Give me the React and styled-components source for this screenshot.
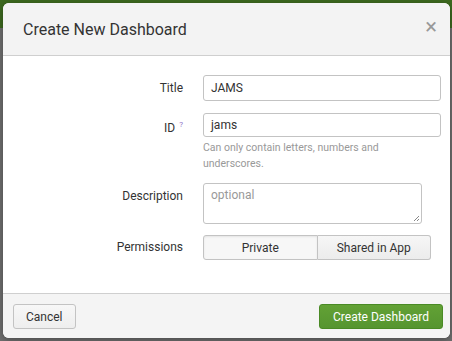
import React from 'react';
import styled, { createGlobalStyle } from 'styled-components';

const GlobalStyle = createGlobalStyle`
  html, body {
    margin: 0;
    padding: 0;
    width: 452px;
    height: 341px;
    overflow: hidden;
    font-family: Roboto, "Liberation Sans", sans-serif;
  }
`;

const Backdrop = styled.div`
  width: 452px;
  height: 341px;
  box-sizing: border-box;
  padding: 3px 2px 3px 3px;
  background: linear-gradient(#3d6a1f 0 28px, #6f6f6f 28px);
`;

const Modal = styled.div`
  height: 335px;
  display: flex;
  flex-direction: column;
  background: #fff;
  border-radius: 6px;
  overflow: hidden;
  box-shadow: 0 2px 8px rgba(0, 0, 0, 0.35);
`;

const Header = styled.div`
  height: 52px;
  flex: none;
  display: flex;
  align-items: center;
  justify-content: space-between;
  padding: 0 13px 0 20px;
  background: #f3f3f3;
  border-bottom: 1px solid #cfcfcf;
`;

const Title = styled.h3`
  margin: 0;
  font-size: 16px;
  font-weight: 400;
  color: #333;
`;

const Close = styled.span`
  font-size: 22px;
  line-height: 1;
  color: #999;
  margin-top: -4px;
`;

const Body = styled.div`
  flex: 1;
  padding: 19px 0 0;
  display: flex;
  flex-direction: column;
`;

const Row = styled.div`
  display: grid;
  grid-template-columns: 180px 1fr;
  column-gap: 20px;
  align-items: start;
  margin-bottom: ${p => p.$gap || 0}px;
`;

const Label = styled.label`
  text-align: right;
  font-size: 12px;
  color: #333;
  line-height: ${p => p.$lh || 26}px;
`;

const Help = styled.sup`
  font-size: 8px;
  color: #8f74c7;
  margin-left: 4px;
`;

const Field = styled.div`
  display: flex;
  flex-direction: column;
`;

const Input = styled.div`
  width: ${p => p.$w || 238}px;
  height: ${p => p.$h || 26}px;
  box-sizing: border-box;
  border: 1px solid #c3c3c3;
  border-radius: 3px;
  padding: ${p => (p.$multi ? '4px 7px' : '0 7px')};
  display: flex;
  align-items: ${p => (p.$multi ? 'flex-start' : 'center')};
  font-size: 12px;
  color: ${p => (p.$placeholder ? '#999' : '#333')};
  background: #fff;
  position: relative;
`;

const Grip = styled.svg`
  position: absolute;
  right: 1px;
  bottom: 1px;
`;

const HelpText = styled.div`
  font-size: 10.5px;
  line-height: 16px;
  color: #999;
  margin-top: 3px;
  width: 200px;
`;

const Toggle = styled.div`
  display: flex;
  width: 228px;
  height: 25px;
`;

const ToggleButton = styled.div`
  flex: 1;
  display: flex;
  align-items: center;
  justify-content: center;
  font-size: 12px;
  color: #333;
  border: 1px solid #c3c3c3;
  background: ${p => (p.$active ? '#f7f7f7' : 'linear-gradient(#f6f6f6, #ececec)')};
  box-shadow: ${p => (p.$active ? 'inset 0 1px 2px rgba(0,0,0,0.08)' : 'none')};
  border-radius: ${p => (p.$first ? '3px 0 0 3px' : '0 3px 3px 0')};
  ${p => (p.$first ? '' : 'border-left: none;')}
`;

const Footer = styled.div`
  height: 45px;
  flex: none;
  box-sizing: border-box;
  display: flex;
  justify-content: space-between;
  align-items: flex-start;
  padding: 10px 7px 0 10px;
  background: #f4f4f4;
  border-top: 1px solid #cfcfcf;
`;

const Button = styled.div`
  height: 25px;
  box-sizing: border-box;
  padding: 0 ${p => (p.$primary ? 13 : 12)}px;
  display: flex;
  align-items: center;
  font-size: 12px;
  border-radius: 3px;
  border: 1px solid ${p => (p.$primary ? '#4a8a25' : '#c3c3c3')};
  color: ${p => (p.$primary ? '#fff' : '#333')};
  background: ${p => (p.$primary ? 'linear-gradient(#62a135, #569530)' : 'linear-gradient(#f7f7f7, #eeeeee)')};
`;

export default function App() {
  return (
    <>
      <GlobalStyle />
      <Backdrop>
        <Modal>
          <Header>
            <Title>Create New Dashboard</Title>
            <Close>×</Close>
          </Header>
          <Body>
            <Row $gap={12}>
              <Label>Title</Label>
              <Input>JAMS</Input>
            </Row>
            <Row $gap={11}>
              <Label $lh={24}>ID<Help>?</Help></Label>
              <Field>
                <Input $h={24}>jams</Input>
                <HelpText>Can only contain letters, numbers and underscores.</HelpText>
              </Field>
            </Row>
            <Row $gap={11}>
              <Label $lh={26}>Description</Label>
              <Input $w={219} $h={41} $multi $placeholder>
                optional
                <Grip width="8" height="8" viewBox="0 0 8 8">
                  <path d="M7 2 L2 7 M7 5 L5 7" stroke="#888" strokeWidth="1" fill="none" />
                </Grip>
              </Input>
            </Row>
            <Row>
              <Label $lh={25}>Permissions</Label>
              <Toggle>
                <ToggleButton $first $active>Private</ToggleButton>
                <ToggleButton>Shared in App</ToggleButton>
              </Toggle>
            </Row>
          </Body>
          <Footer>
            <Button>Cancel</Button>
            <Button $primary>Create Dashboard</Button>
          </Footer>
        </Modal>
      </Backdrop>
    </>
  );
}
